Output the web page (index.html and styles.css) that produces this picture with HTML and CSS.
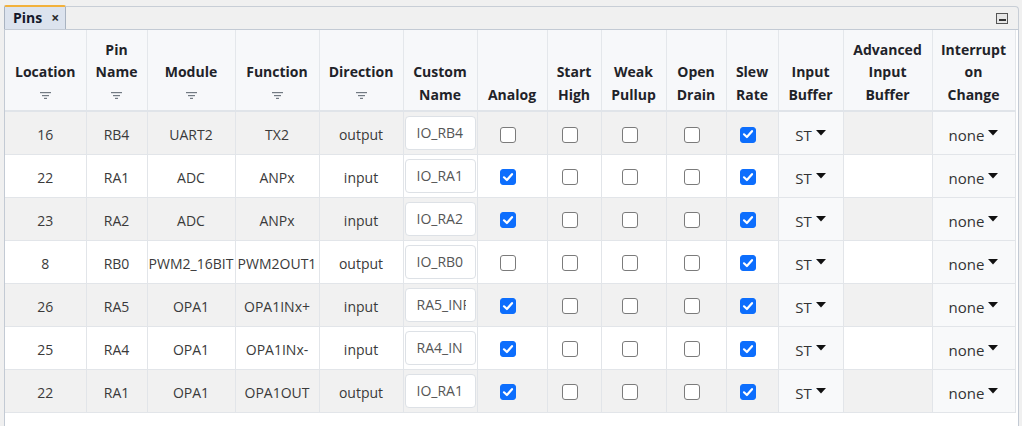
FILE: index.html
```html
<!DOCTYPE html>
<html lang="en">
<head>
<meta charset="utf-8">
<title>Pins</title>
<link rel="stylesheet" href="styles.css">
</head>
<body>
<div class="panel">
  <div class="tabbar">
    <div class="tab"><span class="tab-title">Pins</span><span class="tab-close">×</span></div>
    <div class="strip">
      <span class="minimize"><span class="minimize-bar"></span></span>
    </div>
  </div>
  <div class="panel-body">
    <table class="pins">
      <colgroup>
        <col class="w81"><col class="w61"><col class="w88"><col class="w84"><col class="w84"><col class="w74"><col class="w70"><col class="w54"><col class="w65"><col class="w60"><col class="w52"><col class="w65"><col class="w89"><col class="w83">
      </colgroup>
      <thead>
        <tr>
          <th><div>Location</div><div class="filter"><svg width="11" height="7" viewBox="0 0 11 7"><rect x="0" y="0" width="11" height="1.2"/><rect x="2" y="3" width="7" height="1.2"/><rect x="4" y="5.8" width="3" height="1.2"/></svg></div></th>
          <th><div>Pin</div><div>Name</div><div class="filter"><svg width="11" height="7" viewBox="0 0 11 7"><rect x="0" y="0" width="11" height="1.2"/><rect x="2" y="3" width="7" height="1.2"/><rect x="4" y="5.8" width="3" height="1.2"/></svg></div></th>
          <th><div>Module</div><div class="filter"><svg width="11" height="7" viewBox="0 0 11 7"><rect x="0" y="0" width="11" height="1.2"/><rect x="2" y="3" width="7" height="1.2"/><rect x="4" y="5.8" width="3" height="1.2"/></svg></div></th>
          <th><div>Function</div><div class="filter"><svg width="11" height="7" viewBox="0 0 11 7"><rect x="0" y="0" width="11" height="1.2"/><rect x="2" y="3" width="7" height="1.2"/><rect x="4" y="5.8" width="3" height="1.2"/></svg></div></th>
          <th><div>Direction</div><div class="filter"><svg width="11" height="7" viewBox="0 0 11 7"><rect x="0" y="0" width="11" height="1.2"/><rect x="2" y="3" width="7" height="1.2"/><rect x="4" y="5.8" width="3" height="1.2"/></svg></div></th>
          <th><div>Custom</div><div>Name</div></th>
          <th><div>Analog</div></th>
          <th><div>Start</div><div>High</div></th>
          <th><div>Weak</div><div>Pullup</div></th>
          <th><div>Open</div><div>Drain</div></th>
          <th><div>Slew</div><div>Rate</div></th>
          <th><div>Input</div><div>Buffer</div></th>
          <th><div>Advanced</div><div>Input</div><div>Buffer</div></th>
          <th><div>Interrupt</div><div>on</div><div>Change</div></th>
        </tr>
      </thead>
      <tbody>
        <tr>
          <td>16</td><td>RB4</td><td>UART2</td><td>TX2</td><td>output</td>
          <td><input class="name" type="text" value="IO_RB4" readonly></td>
          <td class="chk"><span class="cb"></span></td>
          <td class="chk"><span class="cb"></span></td>
          <td class="chk"><span class="cb"></span></td>
          <td class="chk"><span class="cb"></span></td>
          <td class="chk"><span class="cb on"><svg width="16" height="16" viewBox="0 0 16 16"><path d="M4 8.3 L6.9 11 L12 5.2"/></svg></span></td>
          <td class="sel"><span>ST</span><svg class="caret" width="10" height="6" viewBox="0 0 10 6"><path d="M0 0 H10 L5 5.5 Z"/></svg></td>
          <td></td>
          <td class="sel"><span>none</span><svg class="caret" width="10" height="6" viewBox="0 0 10 6"><path d="M0 0 H10 L5 5.5 Z"/></svg></td>
        </tr>
        <tr>
          <td>22</td><td>RA1</td><td>ADC</td><td>ANPx</td><td>input</td>
          <td><input class="name" type="text" value="IO_RA1" readonly></td>
          <td class="chk"><span class="cb on"><svg width="16" height="16" viewBox="0 0 16 16"><path d="M4 8.3 L6.9 11 L12 5.2"/></svg></span></td>
          <td class="chk"><span class="cb"></span></td>
          <td class="chk"><span class="cb"></span></td>
          <td class="chk"><span class="cb"></span></td>
          <td class="chk"><span class="cb on"><svg width="16" height="16" viewBox="0 0 16 16"><path d="M4 8.3 L6.9 11 L12 5.2"/></svg></span></td>
          <td class="sel"><span>ST</span><svg class="caret" width="10" height="6" viewBox="0 0 10 6"><path d="M0 0 H10 L5 5.5 Z"/></svg></td>
          <td></td>
          <td class="sel"><span>none</span><svg class="caret" width="10" height="6" viewBox="0 0 10 6"><path d="M0 0 H10 L5 5.5 Z"/></svg></td>
        </tr>
        <tr>
          <td>23</td><td>RA2</td><td>ADC</td><td>ANPx</td><td>input</td>
          <td><input class="name" type="text" value="IO_RA2" readonly></td>
          <td class="chk"><span class="cb on"><svg width="16" height="16" viewBox="0 0 16 16"><path d="M4 8.3 L6.9 11 L12 5.2"/></svg></span></td>
          <td class="chk"><span class="cb"></span></td>
          <td class="chk"><span class="cb"></span></td>
          <td class="chk"><span class="cb"></span></td>
          <td class="chk"><span class="cb on"><svg width="16" height="16" viewBox="0 0 16 16"><path d="M4 8.3 L6.9 11 L12 5.2"/></svg></span></td>
          <td class="sel"><span>ST</span><svg class="caret" width="10" height="6" viewBox="0 0 10 6"><path d="M0 0 H10 L5 5.5 Z"/></svg></td>
          <td></td>
          <td class="sel"><span>none</span><svg class="caret" width="10" height="6" viewBox="0 0 10 6"><path d="M0 0 H10 L5 5.5 Z"/></svg></td>
        </tr>
        <tr>
          <td>8</td><td>RB0</td><td>PWM2_16BIT</td><td>PWM2OUT1</td><td>output</td>
          <td><input class="name" type="text" value="IO_RB0" readonly></td>
          <td class="chk"><span class="cb"></span></td>
          <td class="chk"><span class="cb"></span></td>
          <td class="chk"><span class="cb"></span></td>
          <td class="chk"><span class="cb"></span></td>
          <td class="chk"><span class="cb on"><svg width="16" height="16" viewBox="0 0 16 16"><path d="M4 8.3 L6.9 11 L12 5.2"/></svg></span></td>
          <td class="sel"><span>ST</span><svg class="caret" width="10" height="6" viewBox="0 0 10 6"><path d="M0 0 H10 L5 5.5 Z"/></svg></td>
          <td></td>
          <td class="sel"><span>none</span><svg class="caret" width="10" height="6" viewBox="0 0 10 6"><path d="M0 0 H10 L5 5.5 Z"/></svg></td>
        </tr>
        <tr>
          <td>26</td><td>RA5</td><td>OPA1</td><td>OPA1INx+</td><td>input</td>
          <td><input class="name" type="text" value="RA5_INP" readonly></td>
          <td class="chk"><span class="cb on"><svg width="16" height="16" viewBox="0 0 16 16"><path d="M4 8.3 L6.9 11 L12 5.2"/></svg></span></td>
          <td class="chk"><span class="cb"></span></td>
          <td class="chk"><span class="cb"></span></td>
          <td class="chk"><span class="cb"></span></td>
          <td class="chk"><span class="cb on"><svg width="16" height="16" viewBox="0 0 16 16"><path d="M4 8.3 L6.9 11 L12 5.2"/></svg></span></td>
          <td class="sel"><span>ST</span><svg class="caret" width="10" height="6" viewBox="0 0 10 6"><path d="M0 0 H10 L5 5.5 Z"/></svg></td>
          <td></td>
          <td class="sel"><span>none</span><svg class="caret" width="10" height="6" viewBox="0 0 10 6"><path d="M0 0 H10 L5 5.5 Z"/></svg></td>
        </tr>
        <tr>
          <td>25</td><td>RA4</td><td>OPA1</td><td>OPA1INx-</td><td>input</td>
          <td><input class="name" type="text" value="RA4_IN" readonly></td>
          <td class="chk"><span class="cb on"><svg width="16" height="16" viewBox="0 0 16 16"><path d="M4 8.3 L6.9 11 L12 5.2"/></svg></span></td>
          <td class="chk"><span class="cb"></span></td>
          <td class="chk"><span class="cb"></span></td>
          <td class="chk"><span class="cb"></span></td>
          <td class="chk"><span class="cb on"><svg width="16" height="16" viewBox="0 0 16 16"><path d="M4 8.3 L6.9 11 L12 5.2"/></svg></span></td>
          <td class="sel"><span>ST</span><svg class="caret" width="10" height="6" viewBox="0 0 10 6"><path d="M0 0 H10 L5 5.5 Z"/></svg></td>
          <td></td>
          <td class="sel"><span>none</span><svg class="caret" width="10" height="6" viewBox="0 0 10 6"><path d="M0 0 H10 L5 5.5 Z"/></svg></td>
        </tr>
        <tr>
          <td>22</td><td>RA1</td><td>OPA1</td><td>OPA1OUT</td><td>output</td>
          <td><input class="name" type="text" value="IO_RA1" readonly></td>
          <td class="chk"><span class="cb on"><svg width="16" height="16" viewBox="0 0 16 16"><path d="M4 8.3 L6.9 11 L12 5.2"/></svg></span></td>
          <td class="chk"><span class="cb"></span></td>
          <td class="chk"><span class="cb"></span></td>
          <td class="chk"><span class="cb"></span></td>
          <td class="chk"><span class="cb on"><svg width="16" height="16" viewBox="0 0 16 16"><path d="M4 8.3 L6.9 11 L12 5.2"/></svg></span></td>
          <td class="sel"><span>ST</span><svg class="caret" width="10" height="6" viewBox="0 0 10 6"><path d="M0 0 H10 L5 5.5 Z"/></svg></td>
          <td></td>
          <td class="sel"><span>none</span><svg class="caret" width="10" height="6" viewBox="0 0 10 6"><path d="M0 0 H10 L5 5.5 Z"/></svg></td>
        </tr>
      </tbody>
    </table>
  </div>
</div>
</body>
</html>
```

FILE: styles.css
```css
html, body {
  margin: 0;
  padding: 0;
}
body {
  background: #f0f0f0;
  font-family: "Open Sans", "Noto Sans", sans-serif;
  color: #3a3a3a;
  overflow: hidden;
}
.panel {
  margin: 5px 0 0 4px;
  width: 1015px;
}
.tabbar {
  display: flex;
  height: 24px;
  border-bottom: 1px solid #c3cad4;
}
.tab {
  width: 62px;
  box-sizing: border-box;
  background: #dce3ee;
  border-top: 2px solid #f2b13c;
  border-left: 1px solid #a9b3c1;
  border-right: 1px solid #a9b3c1;
  border-radius: 2px 2px 0 0;
  display: flex;
  align-items: center;
  padding-left: 8px;
  gap: 9px;
}
.tab-title {
  font-weight: 700;
  font-size: 14px;
  color: #15182a;
  line-height: 1;
}
.tab-close {
  font-weight: 700;
  font-size: 14px;
  color: #2a2a2a;
  line-height: 1;
}
.strip {
  flex: 1;
  margin-top: 1px;
  border-top: 1px solid #c8ced6;
  border-right: 1px solid #c8ced6;
  border-top-right-radius: 4px;
  background: #f0f0f0;
  display: flex;
  justify-content: flex-end;
  align-items: center;
  padding-right: 10px;
}
.minimize {
  width: 12px;
  height: 11px;
  box-sizing: border-box;
  border: 1px solid #555;
  background: #e6e6e6;
  display: flex;
  justify-content: center;
  align-items: flex-end;
  padding-bottom: 2px;
}
.minimize-bar {
  width: 7px;
  height: 2px;
  background: #333;
}
.panel-body {
  border-left: 1px solid #c3cad4;
  border-right: 1px solid #c3cad4;
  background: #fff;
  height: 400px;
}
.pins {
  width: 1010px;
  border-collapse: collapse;
  table-layout: fixed;
}
.w81 { width: 81px; }
.w61 { width: 61px; }
.w88 { width: 88px; }
.w84 { width: 84px; }
.w74 { width: 74px; }
.w70 { width: 70px; }
.w54 { width: 54px; }
.w65 { width: 65px; }
.w60 { width: 60px; }
.w52 { width: 52px; }
.w89 { width: 89px; }
.w83 { width: 83px; }
.pins th {
  background: #f7f8fa;
  height: 76px;
  padding: 0 2px 4px;
  vertical-align: bottom;
  font-size: 14px;
  font-weight: 700;
  line-height: 22.5px;
  color: #1f2329;
  border-left: 1px solid #e4e7eb;
  border-right: 1px solid #e4e7eb;
  border-bottom: 2px solid #e0e4e9;
  white-space: nowrap;
}
.pins th:first-child,
.pins td:first-child {
  border-left: none;
}
.filter {
  height: 22.5px;
  display: flex;
  align-items: center;
  justify-content: center;
  padding-top: 2px;
  box-sizing: border-box;
}
.filter svg {
  fill: #727a82;
  display: block;
}
.pins td {
  height: 43px;
  padding: 4px 0 0;
  text-align: center;
  vertical-align: middle;
  font-size: 14px;
  border: 1px solid #e2e5e9;
  white-space: nowrap;
  box-sizing: border-box;
}
.pins tbody tr:nth-child(odd) td {
  background: #f1f1f1;
}
.pins tbody tr td.sel {
  background: #f8f9fa;
}
.name {
  width: 71px;
  height: 34px;
  box-sizing: border-box;
  border: 1px solid #dde1e6;
  border-radius: 4px;
  background: #fff;
  font-family: "Open Sans", "Noto Sans", sans-serif;
  font-size: 14px;
  color: #555;
  padding: 0 9px 0 11px;
  margin: -4px auto 0;
  display: block;
  outline: none;
}
.chk {
  padding-right: 8px !important;
}
.cb {
  display: inline-block;
  width: 16px;
  height: 16px;
  box-sizing: border-box;
  border: 1.4px solid #7b7b7b;
  border-radius: 3px;
  background: #fff;
  vertical-align: middle;
  margin-top: -4px;
  position: relative;
}
.cb.on {
  background: #0d6efd;
  border-color: #0d6efd;
}
.cb.on svg {
  position: absolute;
  left: -1.4px;
  top: -1.4px;
  fill: none;
  stroke: #fff;
  stroke-width: 2.2;
  stroke-linecap: round;
  stroke-linejoin: round;
}
.sel span {
  color: #333;
  font-size: 15px;
}
.sel .caret {
  fill: #111;
  vertical-align: top;
  margin-top: 5px;
  margin-left: 4px;
}
```
